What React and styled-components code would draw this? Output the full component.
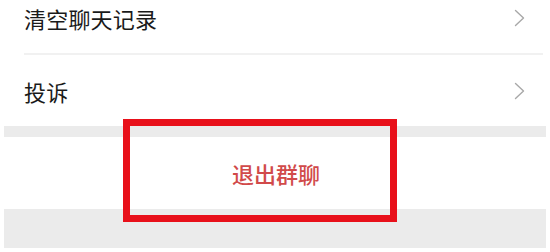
import React from "react";
import styled, { createGlobalStyle } from "styled-components";

const Global = createGlobalStyle`
  html, body { margin: 0; padding: 0; background: #ffffff; }
  body { font-family: "Noto Sans CJK SC", "Noto Sans", sans-serif; }
  * { box-sizing: border-box; }
`;

const Page = styled.div`
  position: relative;
  width: 550px;
  height: 252px;
  overflow: hidden;
  padding: 0 4px 4px 4px;
  display: flex;
  flex-direction: column;
`;

const List = styled.div`
  margin-top: -18px;
  background: #ffffff;
  display: flex;
  flex-direction: column;
`;

const Row = styled.div`
  height: ${(p) => p.$h}px;
  display: flex;
  align-items: center;
  justify-content: space-between;
  padding: 0 21px 0 20px;
  font-size: 22px;
  color: #1a1a1a;
  letter-spacing: 0.2px;
`;

const Divider = styled.div`
  height: 2px;
  margin: 0 3px 0 20px;
  background: #f1f1f1;
`;

const Gap = styled.div`
  height: ${(p) => p.$h}px;
  background: #ebebeb;
  flex: ${(p) => (p.$grow ? 1 : "none")};
`;

const ExitButton = styled.div`
  height: 72px;
  background: #ffffff;
  display: flex;
  align-items: center;
  justify-content: center;
  font-size: 22px;
  font-weight: 500;
  color: #d14a4a;
  padding-left: 2px;
`;

const Highlight = styled.div`
  position: absolute;
  left: 123px;
  top: 119px;
  width: 274px;
  height: 103px;
  border: 7px solid #e8101a;
  pointer-events: none;
`;

const Chevron = () => (
  <svg width="11" height="18" viewBox="0 0 11 18" fill="none">
    <polyline
      points="1.5,1.5 9.5,9 1.5,16.5"
      stroke="#a8a8a8"
      strokeWidth="1.4"
      strokeLinecap="round"
      strokeLinejoin="round"
    />
  </svg>
);

export default function App() {
  return (
    <>
      <Global />
      <Page>
        <List>
          <Row $h={71}>
            <span>清空聊天记录</span>
            <Chevron />
          </Row>
          <Divider />
          <Row $h={71}>
            <span>投诉</span>
            <Chevron />
          </Row>
        </List>
        <Gap $h={11} />
        <ExitButton>退出群聊</ExitButton>
        <Gap $grow />
        <Highlight />
      </Page>
    </>
  );
}
